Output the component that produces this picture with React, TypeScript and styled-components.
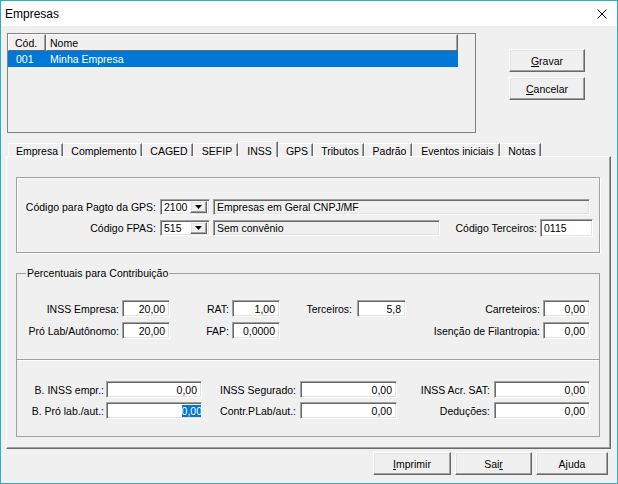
import React from "react";
import styled, { createGlobalStyle, css } from "styled-components";

const Global = createGlobalStyle`
  html, body { margin: 0; padding: 0; background: #f0f0f0; }
  body { font-family: "Liberation Sans", Arial, sans-serif; font-size: 10.5px; color: #000; }
  * { box-sizing: border-box; }
`;

const sunken = css`
  border-style: solid;
  border-width: 1px;
  border-color: #a0a0a0 #fff #fff #a0a0a0;
  box-shadow: inset 1px 1px 0 #696969, inset -1px -1px 0 #e3e3e3;
`;

const raised = css`
  border-style: solid;
  border-width: 1px;
  border-color: #fff #696969 #696969 #fff;
  box-shadow: inset -1px -1px 0 #a0a0a0, inset 1px 1px 0 #e3e3e3;
  background: #f0f0f0;
`;

const Window = styled.div`
  width: 618px;
  height: 484px;
  border: 1px solid #2cafc0;
  display: flex;
  flex-direction: column;
  background: #f0f0f0;
`;

const TitleBar = styled.div`
  height: 25px;
  background: #fff;
  display: flex;
  align-items: center;
  justify-content: space-between;
  padding: 0 10px 0 4px;
  font-size: 12px;
  flex: none;
`;

const Body = styled.div`
  flex: 1;
  display: flex;
  flex-direction: column;
  padding: 7px 6px 8px 5px;
`;

const TopRow = styled.div`
  display: flex;
  height: 100px;
  flex: none;
`;

const ListBox = styled.div`
  width: 469px;
  height: 100px;
  margin-left: 1px;
  border: 1px solid #828282;
  background: #f0f0f0;
`;

const ListRow = styled.div<{ $head?: boolean; $sel?: boolean }>`
  display: flex;
  width: 450px;
  height: ${(p) => (p.$head ? 17 : 16)}px;
  background: ${(p) => (p.$sel ? "#0078d7" : "transparent")};
  color: ${(p) => (p.$sel ? "#fff" : "#000")};
`;

const HeadCell = styled.div<{ $w: number; $pl: number }>`
  width: ${(p) => p.$w}px;
  padding-left: ${(p) => p.$pl}px;
  display: flex;
  align-items: center;
  border-top: 1px solid #fff;
  border-left: 1px solid #fff;
  border-right: 1px solid #696969;
  border-bottom: 1px solid #696969;
  box-shadow: inset -1px 0 0 #a0a0a0;
  white-space: nowrap;
`;

const Cell = styled.div<{ $w: number; $pl: number }>`
  width: ${(p) => p.$w}px;
  padding-left: ${(p) => p.$pl}px;
  display: flex;
  align-items: center;
  white-space: nowrap;
`;

const SideButtons = styled.div`
  display: flex;
  flex-direction: column;
  gap: 5px;
  margin-left: 33px;
  padding-top: 16px;
`;

const Button = styled.button<{ $w: number }>`
  ${raised};
  width: ${(p) => p.$w}px;
  height: 23px;
  padding: 0;
  font: inherit;
  color: #000;
  display: flex;
  align-items: center;
  justify-content: center;
  u { text-decoration: underline; text-underline-offset: 1px; }
`;

const TabStrip = styled.div`
  display: flex;
  align-items: flex-end;
  height: 15px;
  margin-top: 8px;
  padding-left: 2px;
  flex: none;
`;

const Tab = styled.div<{ $w: number; $active?: boolean }>`
  width: ${(p) => p.$w}px;
  height: ${(p) => (p.$active ? 16 : 13)}px;
  margin-bottom: ${(p) => (p.$active ? -1 : 0)}px;
  position: relative;
  z-index: ${(p) => (p.$active ? 2 : 1)};
  background: #f0f0f0;
  border-top: 1px solid #fff;
  border-left: 1px solid ${(p) => (p.$active ? "#fff" : "#f8f8f8")};
  border-right: 1px solid #696969;
  box-shadow: inset -1px 0 0 #a0a0a0;
  display: flex;
  justify-content: center;
  padding-left: 3px;
  padding-top: ${(p) => (p.$active ? 3 : 1)}px;
  line-height: 12px;
  white-space: nowrap;
`;

const Page = styled.div`
  height: 293px;
  border-top: 1px solid #fff;
  border-left: 1px solid #fff;
  border-right: 1px solid #696969;
  border-bottom: 1px solid #696969;
  box-shadow: inset -1px -1px 0 #a0a0a0;
  padding: 20px 10px 0 9px;
  display: flex;
  flex-direction: column;
  flex: none;
`;

const GroupBox = styled.div`
  height: 76px;
  border: 1px solid #a0a0a0;
  box-shadow: 1px 1px 0 #fff, inset 1px 1px 0 #fff;
  padding: 20px 9px 0 4px;
  display: grid;
  grid-template-columns: 135px 50px 1fr;
  grid-auto-rows: 18px;
  column-gap: 4px;
  row-gap: 3px;
`;

const Label = styled.div<{ $pr?: number }>`
  display: flex;
  align-items: center;
  justify-content: flex-end;
  white-space: nowrap;
  padding-right: ${(p) => p.$pr ?? 0}px;
`;

const Combo = styled.div`
  ${sunken};
  background: #fff;
  height: 16px;
  align-self: center;
  display: flex;
  align-items: center;
  justify-content: space-between;
  padding: 1px 2px 1px 3px;
`;

const ComboButton = styled.div`
  ${raised};
  width: 17px;
  height: 12px;
  display: flex;
  align-items: center;
  justify-content: center;
`;

const ReadOnly = styled.div<{ $w?: number }>`
  ${sunken};
  background: #f0f0f0;
  height: 16px;
  align-self: center;
  width: ${(p) => (p.$w ? `${p.$w}px` : "auto")};
  display: flex;
  align-items: center;
  padding-left: 3px;
  white-space: nowrap;
  margin-left: -1px;
`;

const SecondRowTail = styled.div`
  display: flex;
  align-items: center;
  margin-right: -3px;
`;

const Edit = styled.div<{ $w?: number; $h?: number; $right?: boolean }>`
  ${sunken};
  background: #fff;
  height: ${(p) => p.$h ?? 17}px;
  width: ${(p) => (p.$w ? `${p.$w}px` : "auto")};
  display: flex;
  align-items: center;
  justify-content: ${(p) => (p.$right ? "flex-end" : "flex-start")};
  padding: 0 4px 0 3px;
  white-space: nowrap;
  overflow: hidden;
`;

const Selected = styled.span`
  background: #0078d7;
  color: #fff;
  margin-right: -5px;
`;

const FieldSet = styled.fieldset`
  margin: 14px 0 0 0;
  height: 170px;
  border: 1px solid #a0a0a0;
  padding: 20px 6px 16px 6px;
  min-inline-size: 0;
  display: flex;
  flex-direction: column;
`;

const Legend = styled.legend`
  padding: 0 1px;
  margin-left: 3px;
  line-height: 13px;
  font-size: 10.5px;
`;

const PercentGrid = styled.div`
  display: grid;
  grid-template-columns: 99px 48px 62px 48px 77px 49px 137px 47px;
  grid-auto-rows: 17px;
  row-gap: 5px;
`;

const Separator = styled.div`
  margin: 20px -6px 20px -6px;
  height: 2px;
  border-top: 1px solid #a0a0a0;
  border-bottom: 1px solid #fff;
`;

const BaseGrid = styled.div`
  display: grid;
  grid-template-columns: 83px 96px 98px 97px 97px 96px;
  grid-auto-rows: 17px;
  row-gap: 4px;
`;

const Footer = styled.div`
  display: flex;
  justify-content: flex-end;
  gap: 4px;
  margin-top: 3px;
  padding-right: 3px;
`;

const Spacer = styled.div``;

const CloseIcon = () => (
  <svg width="10" height="10" viewBox="0 0 10 10">
    <path d="M0.5 0.5 L9.5 9.5 M9.5 0.5 L0.5 9.5" stroke="#000" strokeWidth="1" />
  </svg>
);

const Arrow = () => (
  <svg width="7" height="4" viewBox="0 0 7 4">
    <path d="M0 0 H7 L3.5 4 Z" fill="#000" />
  </svg>
);

const tabs = [
  { label: "Empresa", w: 55 },
  { label: "Complemento", w: 79 },
  { label: "CAGED", w: 51 },
  { label: "SEFIP", w: 45 },
  { label: "INSS", w: 40, active: true },
  { label: "GPS", w: 35 },
  { label: "Tributos", w: 51 },
  { label: "Padrão", w: 48 },
  { label: "Eventos iniciais", w: 88 },
  { label: "Notas", w: 41 },
];

export default function App() {
  return (
    <>
      <Global />
      <Window>
        <TitleBar>
          <span>Empresas</span>
          <CloseIcon />
        </TitleBar>
        <Body>
          <TopRow>
            <ListBox>
              <ListRow $head>
                <HeadCell $w={38} $pl={6}>Cód.</HeadCell>
                <HeadCell $w={412} $pl={3}>Nome</HeadCell>
              </ListRow>
              <ListRow $sel>
                <Cell $w={38} $pl={8}>001</Cell>
                <Cell $w={412} $pl={4}>Minha Empresa</Cell>
              </ListRow>
            </ListBox>
            <SideButtons>
              <Button $w={76}><span><u>G</u>ravar</span></Button>
              <Button $w={76}><span><u>C</u>ancelar</span></Button>
            </SideButtons>
          </TopRow>

          <TabStrip>
            {tabs.map((t) => (
              <Tab key={t.label} $w={t.w} $active={t.active}>
                {t.label}
              </Tab>
            ))}
          </TabStrip>

          <Page>
            <GroupBox>
              <Label>Código para Pagto da GPS:</Label>
              <Combo>
                <span>2100</span>
                <ComboButton><Arrow /></ComboButton>
              </Combo>
              <ReadOnly>Empresas em Geral CNPJ/MF</ReadOnly>

              <Label>Código FPAS:</Label>
              <Combo>
                <span>515</span>
                <ComboButton><Arrow /></ComboButton>
              </Combo>
              <SecondRowTail>
                <ReadOnly $w={227}>Sem convênio</ReadOnly>
                <Label style={{ flex: 1 }} $pr={3}>Código Terceiros:</Label>
                <Edit $w={53} $h={18}>0115</Edit>
              </SecondRowTail>
            </GroupBox>

            <FieldSet>
              <Legend>Percentuais para Contribuição</Legend>
              <PercentGrid>
                <Label $pr={3}>INSS Empresa:</Label>
                <Edit $right>20,00</Edit>
                <Label $pr={3}>RAT:</Label>
                <Edit $right>1,00</Edit>
                <Label $pr={5}>Terceiros:</Label>
                <Edit $right>5,8</Edit>
                <Label $pr={3}>Carreteiros:</Label>
                <Edit $right>0,00</Edit>

                <Label $pr={3}>Pró Lab/Autônomo:</Label>
                <Edit $right>20,00</Edit>
                <Label $pr={3}>FAP:</Label>
                <Edit $right>0,0000</Edit>
                <Spacer />
                <Spacer />
                <Label $pr={3}>Isenção de Filantropia:</Label>
                <Edit $right>0,00</Edit>
              </PercentGrid>

              <Separator />

              <BaseGrid>
                <Label $pr={2}>B. INSS empr.:</Label>
                <Edit $right>0,00</Edit>
                <Label $pr={4}>INSS Segurado:</Label>
                <Edit $right>0,00</Edit>
                <Label $pr={4}>INSS Acr. SAT:</Label>
                <Edit $right>0,00</Edit>

                <Label $pr={2}>B. Pró lab./aut.:</Label>
                <Edit $right>
                  <Selected>0,00</Selected>
                </Edit>
                <Label $pr={4}>Contr.PLab/aut.:</Label>
                <Edit $right>0,00</Edit>
                <Label $pr={4}>Deduções:</Label>
                <Edit $right>0,00</Edit>
              </BaseGrid>
            </FieldSet>
          </Page>

          <Footer>
            <Button $w={78}><span><u>I</u>mprimir</span></Button>
            <Button $w={77}><span>Sai<u>r</u></span></Button>
            <Button $w={72}><span>Ajuda</span></Button>
          </Footer>
        </Body>
      </Window>
    </>
  );
}
